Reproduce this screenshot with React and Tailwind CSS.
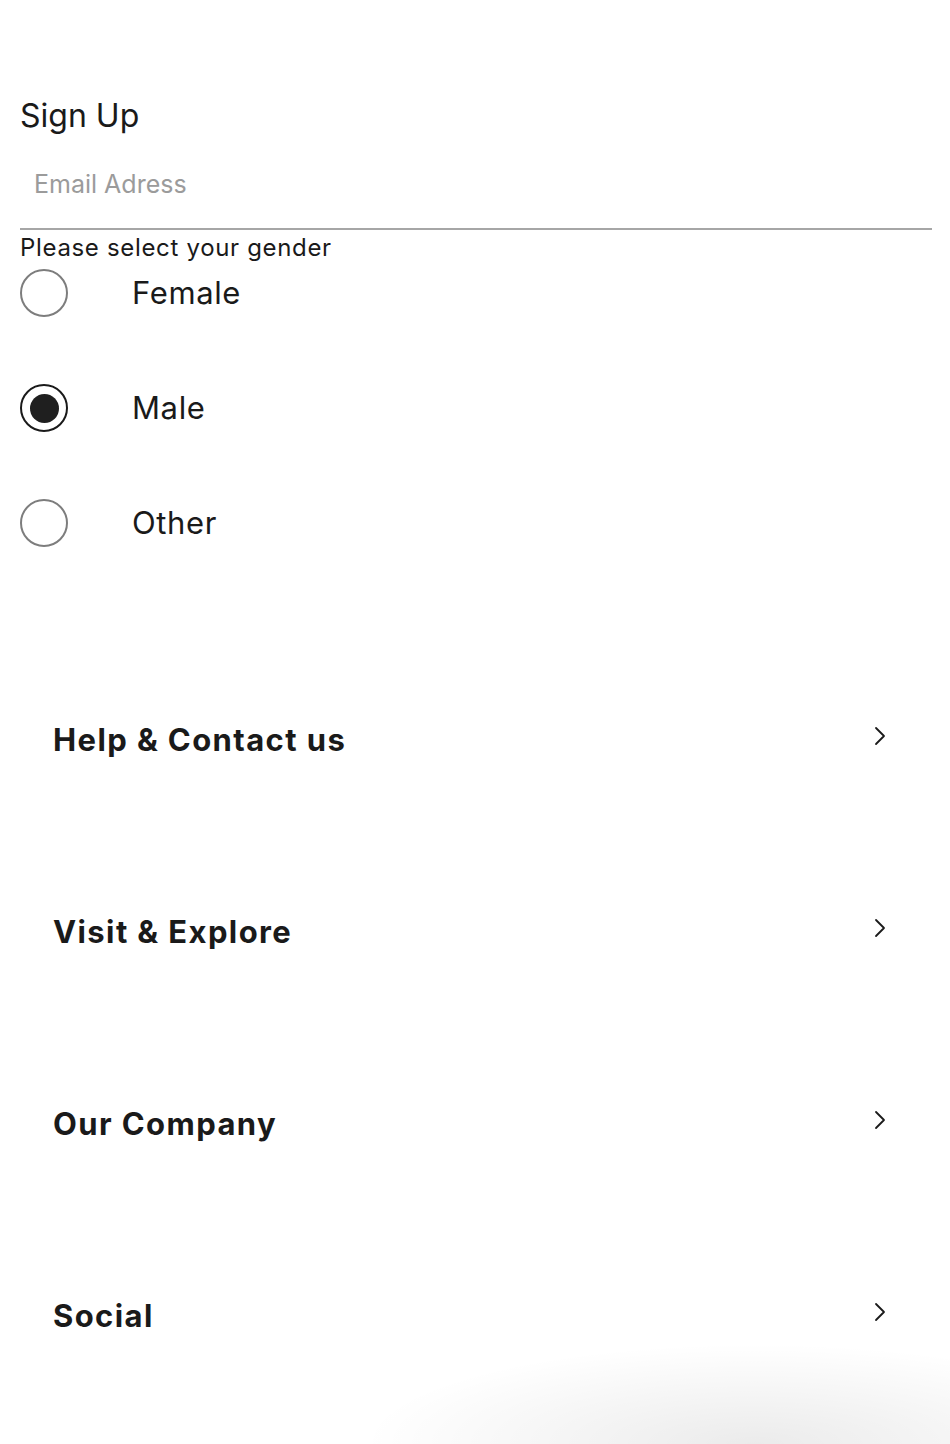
import { useState } from 'react';

const genders = ['Female', 'Male', 'Other'];

const menuItems = ['Help & Contact us', 'Visit & Explore', 'Our Company', 'Social'];

function Chevron() {
  return (
    <svg width="12" height="20" viewBox="0 0 12 20" fill="none" className="text-[#1a1a1a]">
      <path d="M2 2l8 8-8 8" stroke="currentColor" strokeWidth="1.8" strokeLinecap="round" strokeLinejoin="round" />
    </svg>
  );
}

function Radio({ checked }) {
  return (
    <span
      className={`flex h-12 w-12 shrink-0 items-center justify-center rounded-full border-2 ${
        checked ? 'border-[#1a1a1a]' : 'border-[#7d7d7d]'
      }`}
    >
      {checked && <span className="h-[29px] w-[29px] rounded-full bg-[#1f1f1f]" />}
    </span>
  );
}

export default function App() {
  const [gender, setGender] = useState('Male');

  return (
    <div className="relative min-h-[1444px] overflow-hidden bg-white font-['Inter',sans-serif] text-[#1a1a1a]">
      <div className="px-5 pt-[98px]">
        {/* Sign up */}
        <h1 className="text-[32px] leading-[36px] font-normal">Sign Up</h1>

        <input
          type="email"
          placeholder="Email Adress"
          className="mt-[6px] block h-[90px] w-[912px] border-b-2 border-[#a6a6a6] pl-[14px] text-[25px] text-[#1a1a1a] outline-none placeholder:text-[#9b9b9b]"
        />

        <p className="text-[24px] leading-[36px] tracking-[0.028em]">Please select your gender</p>

        {/* Gender radios */}
        <div className="mt-[3px] flex flex-col gap-[67px]">
          {genders.map((g) => (
            <label
              key={g}
              className="flex cursor-pointer items-center"
              onClick={() => setGender(g)}
            >
              <Radio checked={gender === g} />
              <span className="ml-[64px] text-[31px] leading-[36px] tracking-[0.02em]">{g}</span>
            </label>
          ))}
        </div>
      </div>

      {/* Footer menu */}
      <div className="mt-[97px] pl-[53px] pr-[64px]">
        {menuItems.map((item) => (
          <button
            key={item}
            type="button"
            className="flex h-[192px] w-full items-center justify-between text-left"
          >
            <span className="text-[31px] leading-[40px] font-bold tracking-[0.045em]">{item}</span>
            <span className="-mt-[8px]">
              <Chevron />
            </span>
          </button>
        ))}
      </div>

      {/* soft shadow at bottom */}
      <div className="pointer-events-none absolute bottom-0 left-[300px] h-[140px] w-[700px] bg-[radial-gradient(ellipse_70%_90%_at_65%_100%,rgba(0,0,0,0.08),rgba(0,0,0,0)_80%)]" />
    </div>
  );
}
